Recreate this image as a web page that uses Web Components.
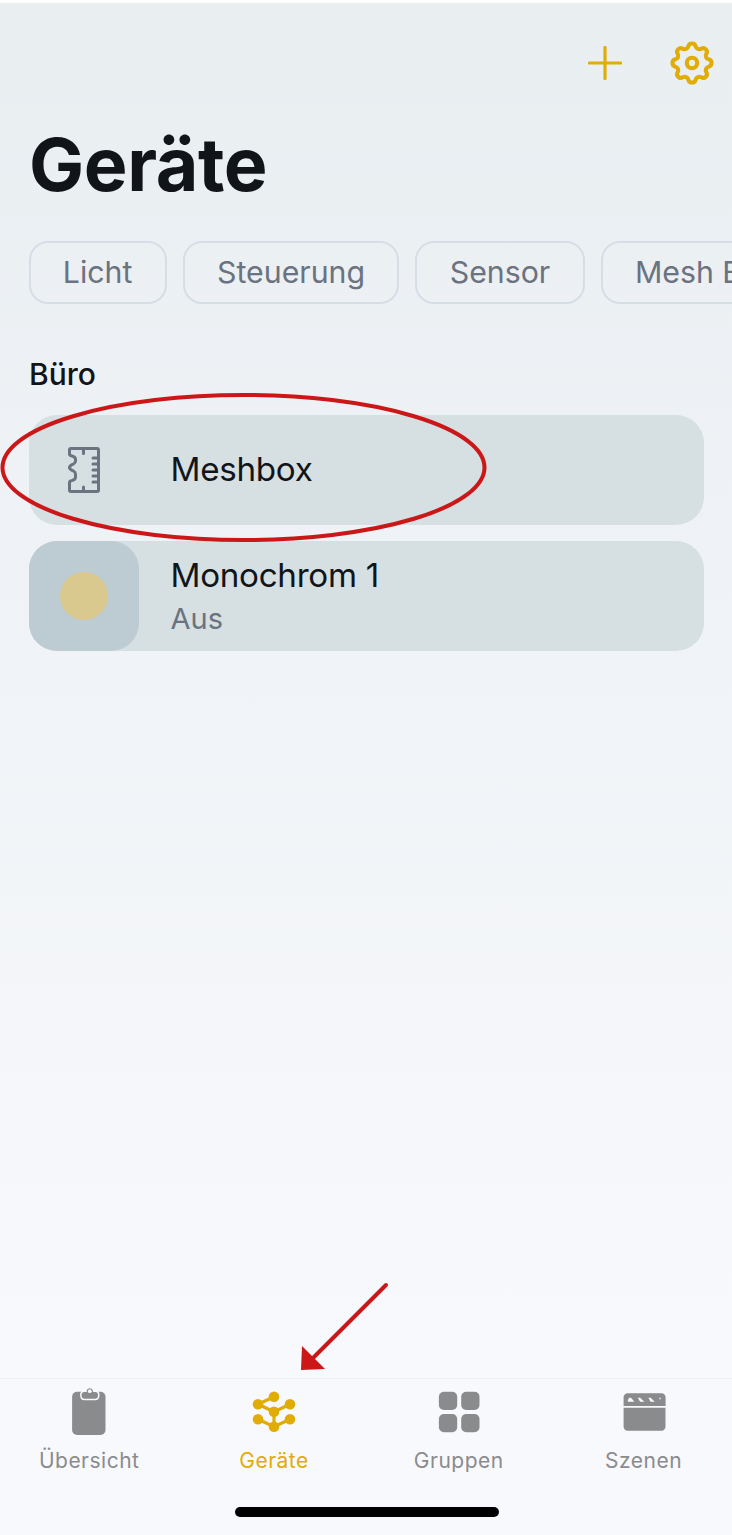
<!DOCTYPE html>
<html lang="de">
<head>
<meta charset="utf-8">
<title>Geräte</title>
<style>
    html, body { margin: 0; padding: 0; background: #fff; }
    body { font-family: Inter, "Noto Sans", sans-serif; }
</style>
</head>
<body>
<app-screen>
    <top-actions></top-actions>
    <page-title>Geräte</page-title>
    <chip-row>
        <filter-chip>Licht</filter-chip>
        <filter-chip>Steuerung</filter-chip>
        <filter-chip>Sensor</filter-chip>
        <filter-chip>Mesh Box</filter-chip>
    </chip-row>
    <section-title>Büro</section-title>
    <device-list>
        <device-row name="Meshbox" type="box"></device-row>
        <device-row name="Monochrom 1" status="Aus" type="light"></device-row>
    </device-list>
    <tab-bar slot="footer">
        <tab-item label="Übersicht" icon="clipboard"></tab-item>
        <tab-item label="Geräte" icon="mesh" active></tab-item>
        <tab-item label="Gruppen" icon="grid"></tab-item>
        <tab-item label="Szenen" icon="clapper"></tab-item>
    </tab-bar>
    <red-marks slot="footer"></red-marks>
</app-screen>

<script>
// ==================== Icons ====================

const ICONS = {
    clipboard: `
        <svg width="48" height="50" viewBox="0 0 48 50">
            <rect x="7.100" y="5.700" width="33.400" height="43.300" rx="5" fill="currentColor"/>
            <path d="M15.800 9c0-2.200 1.500-3.700 3.700-3.700h1.300c.5-2.400 2-3.800 4-3.800s3.500 1.400 4 3.800h1.300c2.200 0 3.700 1.500 3.700 3.700 0 2.500-1.500 4.500-3.700 4.500H19.500c-2.200 0-3.700-2-3.700-4.500z" fill="currentColor" stroke="#f8f9fd" stroke-width="1.500"/>
            <circle cx="24.800" cy="5.200" r="1.900" fill="#f8f9fd"/>
        </svg>`,
    mesh: `
        <svg width="48" height="50" viewBox="0 0 48 50" fill="currentColor" stroke="currentColor" stroke-width="3.200">
            <g transform="translate(0 5.700)">
                <path d="M24 5 8 12.500 24 20M40 12.500 24 20v15M8 27.500 24 35 40 27.500" fill="none"/>
                <g stroke="none">
                    <circle cx="24" cy="5" r="5.300"/>
                    <circle cx="8" cy="12.500" r="5.300"/>
                    <circle cx="40" cy="12.500" r="5.300"/>
                    <circle cx="24" cy="20" r="5.300"/>
                    <circle cx="8" cy="27.500" r="5.300"/>
                    <circle cx="40" cy="27.500" r="5.300"/>
                    <circle cx="24" cy="35" r="5.300"/>
                </g>
            </g>
        </svg>`,
    grid: `
        <svg width="48" height="50" viewBox="0 0 48 50" fill="currentColor">
            <rect x="3.900" y="5.700" width="18.300" height="18.300" rx="5"/>
            <rect x="26.200" y="5.700" width="18.300" height="18.300" rx="5"/>
            <rect x="3.900" y="28" width="18.300" height="18.300" rx="5"/>
            <rect x="26.200" y="28" width="18.300" height="18.300" rx="5"/>
        </svg>`,
    clapper: `
        <svg width="48" height="50" viewBox="0 0 48 50">
            <path d="M3.600 20V11.300c0-2.200 1.800-4 4-4h34c2.200 0 4 1.800 4 4V20z" fill="currentColor"/>
            <path d="M3.600 21.800h41.900v19c0 2.200-1.800 4-4 4H7.600c-2.200 0-4-1.800-4-4z" fill="currentColor"/>
            <path d="M7.800 15.700c-.3-1.200.6-3.800 2-4h1.200l3.400 4zM17.800 11.700h2.300l4.300 4h-4.300zM28.400 11.700h2.200l4.200 4h-4.300zM39.400 11.700h1.300v1.600h-1.300z" fill="#f8f9fd"/>
        </svg>`,
    plus: `
        <svg width="34" height="34" viewBox="0 0 34 34" fill="none" stroke="currentColor" stroke-width="3.200" stroke-linecap="round">
            <path d="M17 1.500v31M1.500 17h31"/>
        </svg>`,
    gear: `
        <svg width="52" height="52" viewBox="0 0 24 24" fill="none" stroke="currentColor" stroke-width="1.900" stroke-linecap="round" stroke-linejoin="round">
            <path d="M10.325 4.317c.426-1.756 2.924-1.756 3.350 0a1.724 1.724 0 002.573 1.066c1.543-.94 3.310.826 2.370 2.370a1.724 1.724 0 001.065 2.572c1.756.426 1.756 2.924 0 3.350a1.724 1.724 0 00-1.066 2.573c.94 1.543-.826 3.310-2.370 2.370a1.724 1.724 0 00-2.572 1.065c-.426 1.756-2.924 1.756-3.350 0a1.724 1.724 0 00-2.573-1.066c-1.543.94-3.310-.826-2.370-2.370a1.724 1.724 0 00-1.065-2.572c-1.756-.426-1.756-2.924 0-3.350a1.724 1.724 0 001.066-2.573c-.94-1.543.826-3.310 2.370-2.370.996.608 2.296.07 2.572-1.065z"/>
            <circle cx="12" cy="12" r="2.400"/>
        </svg>`,
    box: `
        <svg width="34" height="48" viewBox="0 0 34 48" fill="none" stroke="currentColor" stroke-width="3" stroke-linejoin="round" stroke-linecap="round">
            <path d="M4 2.500h26c1 0 1.500.5 1.500 1.500v40c0 1-.5 1.500-1.500 1.500H4c-1 0-1.500-.5-1.500-1.500v-7.500c0-1.200 1-1.800 2.500-2 2.200-.4 3.500-1.500 3.500-3.500v-3c0-1.500-.8-2.300-2-3-1.500-.8-4-1.500-4-3.500s2.500-2.700 4-3.500c1.200-.7 2-1.500 2-3v-1.500c0-2-1.300-3-3.500-3.500-1.500-.3-2.500-.8-2.500-2V4c0-1 .5-1.500 1.500-1.500z"/>
            <path d="M16.500 3v4.500M16.500 41v4.500M31 12h-5M31 18h-5M31 24h-5M31 30h-5M31 36h-5"/>
        </svg>`
};

// ==================== Screen ====================

class AppScreen extends HTMLElement {
    constructor() {
        super();
        this.attachShadow({ mode: 'open' }).innerHTML = `
            <style>
                :host {
                    display: flex;
                    flex-direction: column;
                    position: relative;
                    box-sizing: border-box;
                    width: 732px;
                    height: 1535px;
                    overflow: hidden;
                    padding-top: 3px;
                    background: #fff;
                }
                .body {
                    flex: 1;
                    min-height: 0;
                    background: linear-gradient(180deg, #e9eef1 0%, #f8f9fd 100%);
                }
            </style>
            <div class="body"><slot></slot></div>
            <slot name="footer"></slot>
        `;
    }
}

class TopActions extends HTMLElement {
    constructor() {
        super();
        this.attachShadow({ mode: 'open' }).innerHTML = `
            <style>
                :host {
                    display: flex;
                    justify-content: flex-end;
                    align-items: center;
                    gap: 44px;
                    height: 56px;
                    padding: 32px 14px 0 0;
                    color: #e2ac06;
                }
                svg { display: block; }
            </style>
            ${ICONS.plus}${ICONS.gear}
        `;
    }
}

class PageTitle extends HTMLElement {
    constructor() {
        super();
        this.attachShadow({ mode: 'open' }).innerHTML = `
            <style>
                :host {
                    display: block;
                    margin-top: 30px;
                    padding-left: 29px;
                    font-size: 73.500px;
                    line-height: 88px;
                    font-weight: 700;
                    letter-spacing: -.4px;
                    color: #111418;
                }
            </style>
            <slot></slot>
        `;
    }
}

class ChipRow extends HTMLElement {
    constructor() {
        super();
        this.attachShadow({ mode: 'open' }).innerHTML = `
            <style>
                :host {
                    display: flex;
                    gap: 16px;
                    margin-top: 32px;
                    padding-left: 28.500px;
                    overflow: hidden;
                }
            </style>
            <slot></slot>
        `;
    }
}

class FilterChip extends HTMLElement {
    constructor() {
        super();
        this.attachShadow({ mode: 'open' }).innerHTML = `
            <style>
                :host {
                    display: block;
                    flex: none;
                    box-sizing: border-box;
                    height: 63px;
                    padding: 0 32.300px;
                    border: 2px solid #d7dde7;
                    border-radius: 19px;
                    font-size: 30.300px;
                    line-height: 59px;
                    color: #6b7280;
                    white-space: nowrap;
                }
            </style>
            <slot></slot>
        `;
    }
}

class SectionTitle extends HTMLElement {
    constructor() {
        super();
        this.attachShadow({ mode: 'open' }).innerHTML = `
            <style>
                :host {
                    display: block;
                    margin-top: 50px;
                    padding-left: 29px;
                    font-size: 30px;
                    line-height: 40px;
                    font-weight: 500;
                    color: #111418;
                }
            </style>
            <slot></slot>
        `;
    }
}

class DeviceList extends HTMLElement {
    constructor() {
        super();
        this.attachShadow({ mode: 'open' }).innerHTML = `
            <style>
                :host {
                    display: flex;
                    flex-direction: column;
                    gap: 16px;
                    margin-top: 21px;
                    padding: 0 28px 0 28.500px;
                }
            </style>
            <slot></slot>
        `;
    }
}

class DeviceRow extends HTMLElement {
    connectedCallback() {
        const name = this.getAttribute('name') || '';
        const status = this.getAttribute('status');
        const type = this.getAttribute('type');
        const tile = type === 'light'
            ? '<div class="tile lit"><span class="lamp"></span></div>'
            : `<div class="tile">${ICONS.box}</div>`;
        this.attachShadow({ mode: 'open' }).innerHTML = `
            <style>
                :host {
                    display: flex;
                    align-items: center;
                    height: 110px;
                    border-radius: 28px;
                    background: #d6dfe2;
                }
                .tile {
                    display: flex;
                    align-items: center;
                    justify-content: center;
                    flex: none;
                    width: 110px;
                    height: 110px;
                    border-radius: 28px;
                    color: #6b7280;
                }
                .tile.lit { background: #bdcbd2; }
                .lamp {
                    width: 48px;
                    height: 48px;
                    border-radius: 50%;
                    background: #dac98f;
                }
                .text { margin-left: 32px; padding-bottom: 2px; }
                .text.two { padding: 2px 0 0; }
                .name {
                    font-size: 33.200px;
                    line-height: 44px;
                    letter-spacing: -.3px;
                    color: #111418;
                }
                .status {
                    font-size: 29px;
                    line-height: 44px;
                    color: #6b7280;
                }
            </style>
            ${tile}
            <div class="text ${status ? 'two' : ''}">
                <div class="name">${name}</div>
                ${status ? `<div class="status">${status}</div>` : ''}
            </div>
        `;
    }
}

// ==================== Tab bar ====================

class TabBar extends HTMLElement {
    constructor() {
        super();
        this.attachShadow({ mode: 'open' }).innerHTML = `
            <style>
                :host {
                    display: block;
                    box-sizing: border-box;
                    height: 157px;
                    padding-top: 7px;
                    border-top: 1px solid #eef0f4;
                    background: #f8f9fd;
                }
                .tabs {
                    display: grid;
                    grid-template-columns: repeat(4, 177.800px);
                    column-gap: 7px;
                    padding-left: .3px;
                }
                .home {
                    width: 264px;
                    height: 10px;
                    margin: 33px 0 0 235px;
                    border-radius: 5px;
                    background: #000;
                }
            </style>
            <div class="tabs"><slot></slot></div>
            <div class="home"></div>
        `;
    }
}

class TabItem extends HTMLElement {
    connectedCallback() {
        const active = this.hasAttribute('active');
        this.attachShadow({ mode: 'open' }).innerHTML = `
            <style>
                :host {
                    display: flex;
                    flex-direction: column;
                    align-items: center;
                    color: ${active ? '#e2ac06' : '#8a8b8d'};
                }
                svg { display: block; }
                .label {
                    margin-top: 12px;
                    font-size: 21px;
                    line-height: 26px;
                    letter-spacing: .5px;
                }
            </style>
            ${ICONS[this.getAttribute('icon')]}
            <div class="label">${this.getAttribute('label')}</div>
        `;
    }
}

// ==================== Red annotations drawn over the screenshot ====================

class RedMarks extends HTMLElement {
    constructor() {
        super();
        this.attachShadow({ mode: 'open' }).innerHTML = `
            <style>
                :host {
                    position: absolute;
                    inset: 0;
                    pointer-events: none;
                }
                svg { display: block; }
            </style>
            <svg width="732" height="1535" fill="none">
                <ellipse cx="243.500" cy="467.500" rx="241" ry="72.500" stroke="#cc1719" stroke-width="4"/>
                <path d="M386 1285 312 1359" stroke="#cc1719" stroke-width="4" stroke-linecap="round"/>
                <path d="M302 1346 301 1370 325 1369z" fill="#cc1719"/>
            </svg>
        `;
    }
}

customElements.define('app-screen', AppScreen);
customElements.define('top-actions', TopActions);
customElements.define('page-title', PageTitle);
customElements.define('chip-row', ChipRow);
customElements.define('filter-chip', FilterChip);
customElements.define('section-title', SectionTitle);
customElements.define('device-list', DeviceList);
customElements.define('device-row', DeviceRow);
customElements.define('tab-bar', TabBar);
customElements.define('tab-item', TabItem);
customElements.define('red-marks', RedMarks);
</script>
</body>
</html>
